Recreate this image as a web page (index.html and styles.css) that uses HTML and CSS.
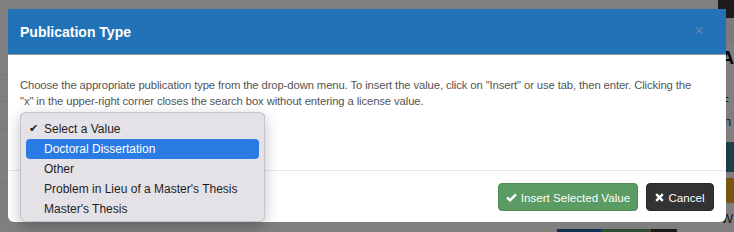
FILE: index.html
```html
<!DOCTYPE html>
<html lang="en">

<head>
    <meta charset="UTF-8">
    <meta name="viewport" content="width=device-width, initial-scale=1.0">
    <title>Publication Type</title>
    <link rel="stylesheet" href="styles.css">
</head>

<body>
    <div class="page">
        <div class="topbar"></div>
        <div class="page-main">
            <div class="page-left">
                <div class="row-line"></div>
                <div class="row-line"></div>
                <div class="row-line"></div>
                <div class="row-line"></div>
                <div class="row-line"></div>
            </div>
            <aside class="page-side">
                <div class="side-head"></div>
                <div class="side-title">A</div>
                <div class="side-text">F<br>in</div>
                <div class="side-btn teal"></div>
                <div class="side-btn brown"></div>
                <div class="side-text last">W</div>
            </aside>
        </div>
        <div class="page-bottom">
            <span class="blk blue"></span>
            <span class="blk green"></span>
            <span class="blk dark"></span>
        </div>
    </div>

    <div class="backdrop"></div>

    <div class="modal">
        <div class="modal-header">
            <h4 class="modal-title">Publication Type</h4>
            <span class="close">&times;</span>
        </div>
        <div class="modal-body">
            <p>Choose the appropriate publication type from the drop-down menu. To insert the value, click on "Insert" or use tab, then enter. Clicking the "x" in the upper-right corner closes the search box without entering a license value.</p>
            <div class="select-box"></div>
        </div>
        <div class="modal-footer">
            <button type="button" class="btn btn-success">
                <svg width="11" height="9" viewBox="0 0 11 9"><path d="M1 4.4 L4 7.3 L10 1.3" fill="none" stroke="#fff" stroke-width="2.4"/></svg>
                Insert Selected Value
            </button>
            <button type="button" class="btn btn-dark">
                <svg width="9" height="9" viewBox="0 0 9 9"><path d="M1.2 1.2 L7.8 7.8 M7.8 1.2 L1.2 7.8" stroke="#fff" stroke-width="2.4"/></svg>
                Cancel
            </button>
        </div>
    </div>

    <!-- native select popup -->
    <ul class="select-menu">
        <li class="checked">Select a Value</li>
        <li class="active">Doctoral Dissertation</li>
        <li>Other</li>
        <li>Problem in Lieu of a Master's Thesis</li>
        <li>Master's Thesis</li>
    </ul>
</body>

</html>
```

FILE: styles.css
```css
* {
    box-sizing: border-box;
}

body {
    margin: 0;
    width: 734px;
    height: 232px;
    overflow: hidden;
    background-color: #fff;
    font-family: "Liberation Sans", Arial, sans-serif;
    position: relative;
}

/* page behind the dialog */
.page {
    height: 232px;
    display: flex;
    flex-direction: column;
}

.topbar {
    height: 9px;
    background-color: #383838;
}

.page-main {
    flex-grow: 1;
    display: flex;
}

.page-left {
    width: 727px;
    padding-top: 48px;
}

.row-line {
    height: 27px;
    border-bottom: 1px solid #f2f2f2;
}

.page-side {
    flex-grow: 1;
    background-color: #fff;
    padding-left: 3px;
    color: #000;
}

.side-head {
    height: 46px;
    margin-left: -3px;
    background-color: #383838;
    border-bottom: 28px solid #f6f6f6;
}

.side-title {
    font-size: 18px;
    font-weight: bold;
    line-height: 16px;
    margin-top: 4px;
}

.side-text {
    font-size: 13px;
    line-height: 20px;
    color: #333;
    margin-top: 26px;
}

.side-text.last {
    margin-top: 6px;
}

.side-btn {
    height: 30px;
    margin-top: 10px;
    border-radius: 4px 0 0 4px;
}

.side-btn.teal {
    background-color: #3b7f91;
}

.side-btn.brown {
    height: 25px;
    background-color: #f0ad1e;
    margin-top: 6px;
}

.page-bottom {
    height: 10px;
    display: flex;
    padding-left: 557px;
}

.blk {
    height: 10px;
}

.blk.blue {
    width: 44px;
    background-color: #1f62a0;
}

.blk.green {
    width: 50px;
    background-color: #5c9460;
}

.blk.dark {
    width: 26px;
    background-color: #333;
}

.backdrop {
    position: absolute;
    top: 0;
    left: 0;
    right: 0;
    bottom: 0;
    background-color: rgba(0, 0, 0, 0.5);
}

/* dialog */
.modal {
    position: absolute;
    top: 9px;
    left: 8px;
    width: 718px;
    height: 213px;
    background-color: #fff;
    border-radius: 0 0 6px 6px;
    display: flex;
    flex-direction: column;
    overflow: hidden;
}

.modal-header {
    height: 46px;
    background-color: #2172b7;
    border-bottom: 1px solid #9a9a9a;
    display: flex;
    align-items: center;
    justify-content: space-between;
    padding: 0 22px 0 12px;
}

.modal-title {
    margin: 0;
    color: #fff;
    font-size: 14px;
    font-weight: bold;
}

.close {
    color: #5885b3;
    font-size: 17px;
    line-height: 1;
    margin-top: -2px;
}

.modal-body {
    height: 116px;
    padding: 22px 22px 0 12px;
    border-bottom: 1px solid #e5e5e5;
}

.modal-body p {
    margin: 0;
    font-size: 11.3px;
    letter-spacing: -0.12px;
    line-height: 16px;
    color: #555;
}

.select-box {
    width: 245px;
    height: 24px;
    margin-top: 4px;
    border: 1px solid #66afe9;
    border-radius: 4px;
}

.modal-footer {
    flex-grow: 1;
    display: flex;
    justify-content: flex-end;
    align-items: flex-start;
    gap: 8px;
    padding: 12px 12px 0;
}

.btn {
    height: 28px;
    border-radius: 4px;
    font-family: "Liberation Sans", Arial, sans-serif;
    font-size: 11.6px;
    color: #fff;
    padding: 0;
    display: flex;
    align-items: center;
    justify-content: center;
    gap: 4px;
    white-space: nowrap;
}

.btn-success {
    width: 140px;
    background-color: #5a9c63;
    border: 1px solid #4e8c56;
}

.btn-dark {
    width: 68px;
    background-color: #333;
    border: 1px solid #2a2a2a;
}

/* open select popup */
.select-menu {
    position: absolute;
    top: 112px;
    left: 20px;
    width: 245px;
    height: 110px;
    margin: 0;
    padding: 6px 5px 4px;
    list-style: none;
    background-color: #e4e2e7;
    border: 1px solid #c6c4ca;
    border-radius: 6px;
    box-shadow: 0 4px 14px rgba(0, 0, 0, 0.25);
    font-family: "Liberation Sans", Arial, sans-serif;
    font-size: 12px;
    color: #1e1e1e;
}

.select-menu li {
    height: 20px;
    line-height: 20px;
    padding-left: 18px;
    border-radius: 4px;
    position: relative;
}

.select-menu li.checked::before {
    content: "\2714";
    position: absolute;
    left: 3px;
    font-family: "DejaVu Sans", sans-serif;
    font-size: 11px;
}

.select-menu li.active {
    background-color: #2a7be4;
    color: #fff;
}
```
